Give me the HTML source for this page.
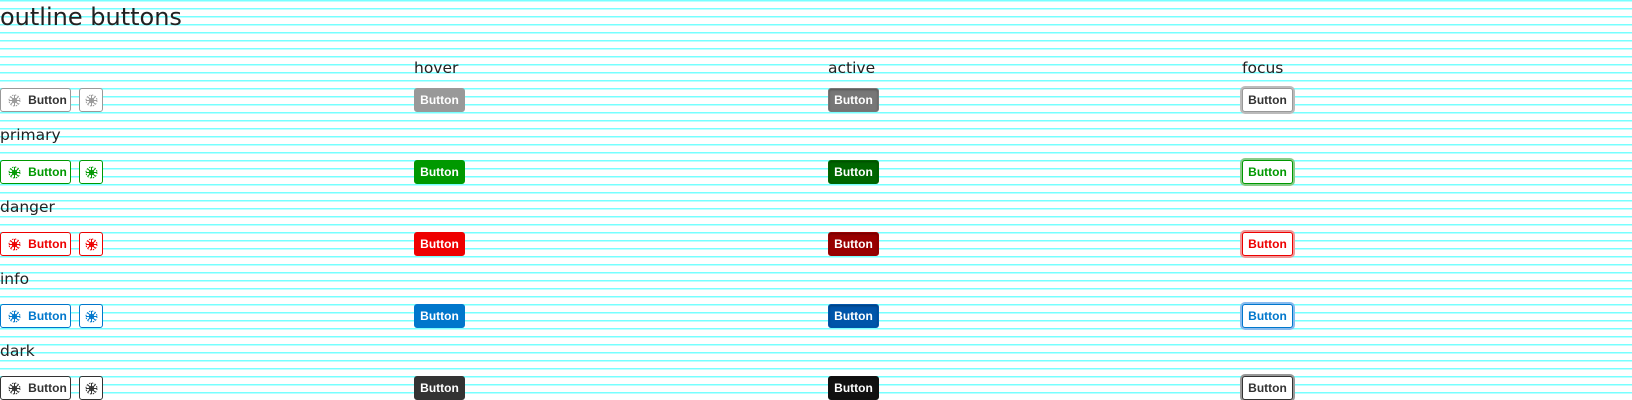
<!DOCTYPE html>
<html><head><style>
body{margin:0;width:1632px;height:400px;overflow:hidden;background:#fff repeating-linear-gradient(to bottom,#7ff 0,#7ff 1.6px,transparent 1.6px,transparent 8px);font-family:"DejaVu Sans","Liberation Sans",sans-serif;color:#222;position:relative}
.t{position:absolute;left:0;top:2px;font-size:24px;line-height:30px;color:#222}
.l{position:absolute;font-size:15.5px;line-height:20px;color:#222}
.b{position:absolute;height:24px;box-sizing:border-box;border:1px solid;border-radius:3px;font:bold 12px "Liberation Sans",sans-serif;line-height:22px;text-align:center;background:#fff}
.ob{width:71px;padding-left:24px}
.ib{width:24px}
.f{width:51px}
.ic{position:absolute;left:7px;top:5px;width:13px;height:13px}
.ib .ic{left:5px}
</style></head><body>
<div class="t">outline buttons</div>
<div class="l" style="left:414px;top:58px">hover</div>
<div class="l" style="left:828px;top:58px">active</div>
<div class="l" style="left:1242px;top:58px">focus</div>
<div id="r"></div>
<script>
var rows=[["",88,"#999","#333","#999","#777","#bbb"],["primary",160,"#090","#090","#090","#060","#8c8"],["danger",232,"#e00","#e00","#e00","#900","#e99"],["info",304,"#07c","#07c","#07c","#05a","#8be"],["dark",376,"#333","#333","#333","#111","#999"]];
var h="";
var ic=function(c){return '<svg class="ic" viewBox="0 0 13 13" stroke="'+c+'" fill="none" stroke-width="1"><circle cx="6.5" cy="6.5" r="2.2"/><circle cx="6.5" cy="6.5" r="5.5" stroke-dasharray="1.5 1.4"/><path d="M6.5 1V12M1 6.5H12M2.6 2.6L10.4 10.4M10.4 2.6L2.6 10.4"/></svg>'};
rows.forEach(function(r){
var y=r[1];
if(r[0])h+='<div class="l" style="left:0;top:'+(y-35)+'px">'+r[0]+'</div>';
h+='<div class="b ob" style="left:0;top:'+y+'px;border-color:'+r[2]+';color:'+r[3]+'">'+ic(r[2])+'Button</div>';
h+='<div class="b ib" style="left:79px;top:'+y+'px;border-color:'+r[2]+'">'+ic(r[2])+'</div>';
h+='<div class="b f" style="left:414px;top:'+y+'px;border-color:'+r[4]+';background:'+r[4]+';color:#fff">Button</div>';
h+='<div class="b f" style="left:828px;top:'+y+'px;border-color:'+r[5]+';background:'+r[5]+';color:#fff;box-shadow:inset 0 1px 2px rgba(0,0,0,.3)">Button</div>';
h+='<div class="b f" style="left:1242px;top:'+y+'px;border-color:'+r[2]+';color:'+r[3]+';box-shadow:0 0 0 2px '+r[6]+'">Button</div>';
});
document.getElementById('r').outerHTML=h;
</script>
</body></html>
